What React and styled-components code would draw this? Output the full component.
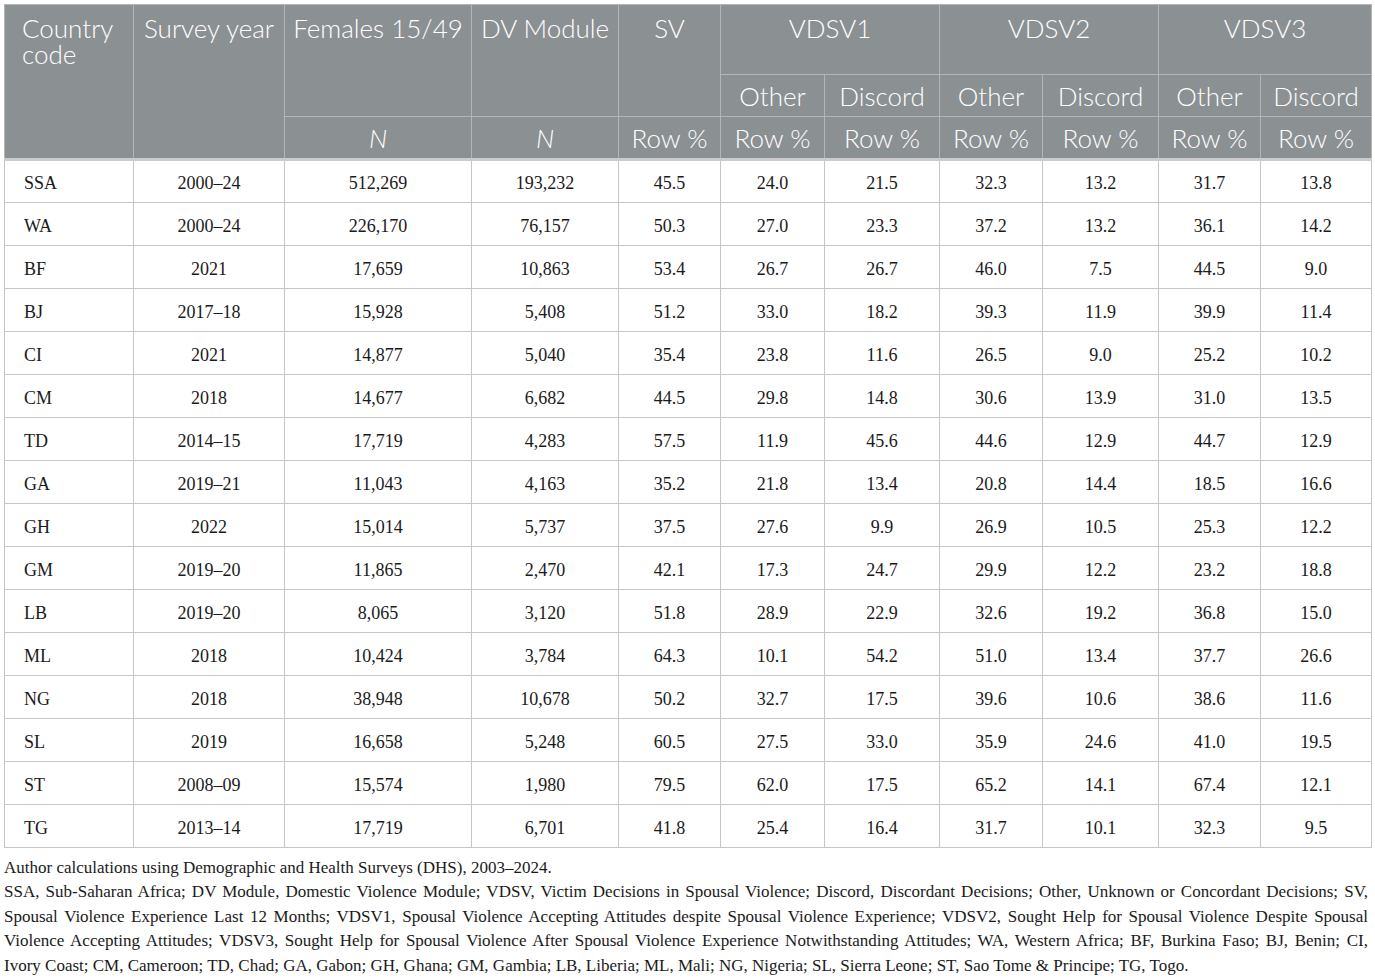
import React from 'react';
import styled, { createGlobalStyle } from 'styled-components';

const GlobalStyle = createGlobalStyle`
    body {
        margin: 0;
        background: #fff;
    }
`;

const Page = styled.div`
    padding: 4px 5px 0 4px;
`;

const Table = styled.table`
    width: 1366px;
    border-collapse: collapse;
    table-layout: fixed;
    border: 1px solid #c4c6c8;
`;

const Col = styled.col`
    width: ${p => p.$w}px;
`;

const HeadRow = styled.tr`
    height: ${p => p.$h}px;
`;

const HeadCell = styled.th`
    background: #8b9093;
    color: #fff;
    font-family: Lato, "Open Sans", sans-serif;
    font-weight: 300;
    font-size: 26px;
    line-height: 26px;
    border: 1px solid #b3b6b8;
    border-bottom: ${p => (p.$last ? '3px solid #c9cbcd' : '1px solid #b3b6b8')};
    text-align: ${p => (p.$left ? 'left' : 'center')};
    vertical-align: ${p => (p.$top ? 'top' : 'middle')};
    padding: ${p => (p.$top ? '10px 2px 0' : '0 2px')};
    padding-left: ${p => (p.$left ? '17px' : '2px')};
    font-style: ${p => (p.$italic ? 'italic' : 'normal')};
    white-space: ${p => (p.$left ? 'normal' : 'nowrap')};
`;

const BodyRow = styled.tr`
    height: 43px;
`;

const Cell = styled.td`
    font-family: "Liberation Serif", "Times New Roman", serif;
    font-size: 18px;
    color: #1a1a1a;
    border: 1px solid #c4c6c8;
    text-align: ${p => (p.$left ? 'left' : 'center')};
    padding: ${p => (p.$left ? '4px 0 0 19px' : '4px 0 0')};
`;

const Notes = styled.div`
    font-family: "Liberation Serif", "Times New Roman", serif;
    font-size: 17px;
    line-height: 24.4px;
    color: #1a1a1a;
    width: 1364px;
    padding-top: 8px;
`;

const NoteLine = styled.span`
    display: block;
    white-space: nowrap;
    text-align: ${p => (p.$fill ? 'justify' : 'left')};
    text-align-last: ${p => (p.$fill ? 'justify' : 'left')};
`;

const widths = [129, 151, 187, 147, 102, 104, 115, 103, 116, 102, 111];

const rows = [
    ['SSA', '2000–24', '512,269', '193,232', '45.5', '24.0', '21.5', '32.3', '13.2', '31.7', '13.8'],
    ['WA', '2000–24', '226,170', '76,157', '50.3', '27.0', '23.3', '37.2', '13.2', '36.1', '14.2'],
    ['BF', '2021', '17,659', '10,863', '53.4', '26.7', '26.7', '46.0', '7.5', '44.5', '9.0'],
    ['BJ', '2017–18', '15,928', '5,408', '51.2', '33.0', '18.2', '39.3', '11.9', '39.9', '11.4'],
    ['CI', '2021', '14,877', '5,040', '35.4', '23.8', '11.6', '26.5', '9.0', '25.2', '10.2'],
    ['CM', '2018', '14,677', '6,682', '44.5', '29.8', '14.8', '30.6', '13.9', '31.0', '13.5'],
    ['TD', '2014–15', '17,719', '4,283', '57.5', '11.9', '45.6', '44.6', '12.9', '44.7', '12.9'],
    ['GA', '2019–21', '11,043', '4,163', '35.2', '21.8', '13.4', '20.8', '14.4', '18.5', '16.6'],
    ['GH', '2022', '15,014', '5,737', '37.5', '27.6', '9.9', '26.9', '10.5', '25.3', '12.2'],
    ['GM', '2019–20', '11,865', '2,470', '42.1', '17.3', '24.7', '29.9', '12.2', '23.2', '18.8'],
    ['LB', '2019–20', '8,065', '3,120', '51.8', '28.9', '22.9', '32.6', '19.2', '36.8', '15.0'],
    ['ML', '2018', '10,424', '3,784', '64.3', '10.1', '54.2', '51.0', '13.4', '37.7', '26.6'],
    ['NG', '2018', '38,948', '10,678', '50.2', '32.7', '17.5', '39.6', '10.6', '38.6', '11.6'],
    ['SL', '2019', '16,658', '5,248', '60.5', '27.5', '33.0', '35.9', '24.6', '41.0', '19.5'],
    ['ST', '2008–09', '15,574', '1,980', '79.5', '62.0', '17.5', '65.2', '14.1', '67.4', '12.1'],
    ['TG', '2013–14', '17,719', '6,701', '41.8', '25.4', '16.4', '31.7', '10.1', '32.3', '9.5'],
];

const noteLines = [
    'SSA, Sub-Saharan Africa; DV Module, Domestic Violence Module; VDSV, Victim Decisions in Spousal Violence; Discord, Discordant Decisions; Other, Unknown or Concordant Decisions; SV,',
    'Spousal Violence Experience Last 12 Months; VDSV1, Spousal Violence Accepting Attitudes despite Spousal Violence Experience; VDSV2, Sought Help for Spousal Violence Despite Spousal',
    'Violence Accepting Attitudes; VDSV3, Sought Help for Spousal Violence After Spousal Violence Experience Notwithstanding Attitudes; WA, Western Africa; BF, Burkina Faso; BJ, Benin; CI,',
    'Ivory Coast; CM, Cameroon; TD, Chad; GA, Gabon; GH, Ghana; GM, Gambia; LB, Liberia; ML, Mali; NG, Nigeria; SL, Sierra Leone; ST, Sao Tome & Principe; TG, Togo.',
];

const App = () => {
    return (
        <Page>
            <GlobalStyle />
            <Table>
                <colgroup>
                    {widths.map((w, i) => <Col key={i} $w={w} />)}
                </colgroup>
                <thead>
                    <HeadRow $h={70}>
                        <HeadCell rowSpan={3} $left $top $last>Country code</HeadCell>
                        <HeadCell rowSpan={3} $top $last>Survey year</HeadCell>
                        <HeadCell rowSpan={2} $top>Females 15/49</HeadCell>
                        <HeadCell rowSpan={2} $top>DV Module</HeadCell>
                        <HeadCell rowSpan={2} $top>SV</HeadCell>
                        <HeadCell colSpan={2} $top>VDSV1</HeadCell>
                        <HeadCell colSpan={2} $top>VDSV2</HeadCell>
                        <HeadCell colSpan={2} $top>VDSV3</HeadCell>
                    </HeadRow>
                    <HeadRow $h={42}>
                        {['Other', 'Discord', 'Other', 'Discord', 'Other', 'Discord'].map((t, i) => (
                            <HeadCell key={i}>{t}</HeadCell>
                        ))}
                    </HeadRow>
                    <HeadRow $h={43}>
                        <HeadCell $italic $last>N</HeadCell>
                        <HeadCell $italic $last>N</HeadCell>
                        {Array.from({ length: 7 }).map((_, i) => (
                            <HeadCell key={i} $last>Row %</HeadCell>
                        ))}
                    </HeadRow>
                </thead>
                <tbody>
                    {rows.map(r => (
                        <BodyRow key={r[0]}>
                            {r.map((v, i) => (
                                <Cell key={i} $left={i === 0}>{v}</Cell>
                            ))}
                        </BodyRow>
                    ))}
                </tbody>
            </Table>
            <Notes>
                <NoteLine>Author calculations using Demographic and Health Surveys (DHS), 2003–2024.</NoteLine>
                {noteLines.map((line, i) => (
                    <NoteLine key={i} $fill={i < noteLines.length - 1}>{line}</NoteLine>
                ))}
            </Notes>
        </Page>
    );
};

export default App;
